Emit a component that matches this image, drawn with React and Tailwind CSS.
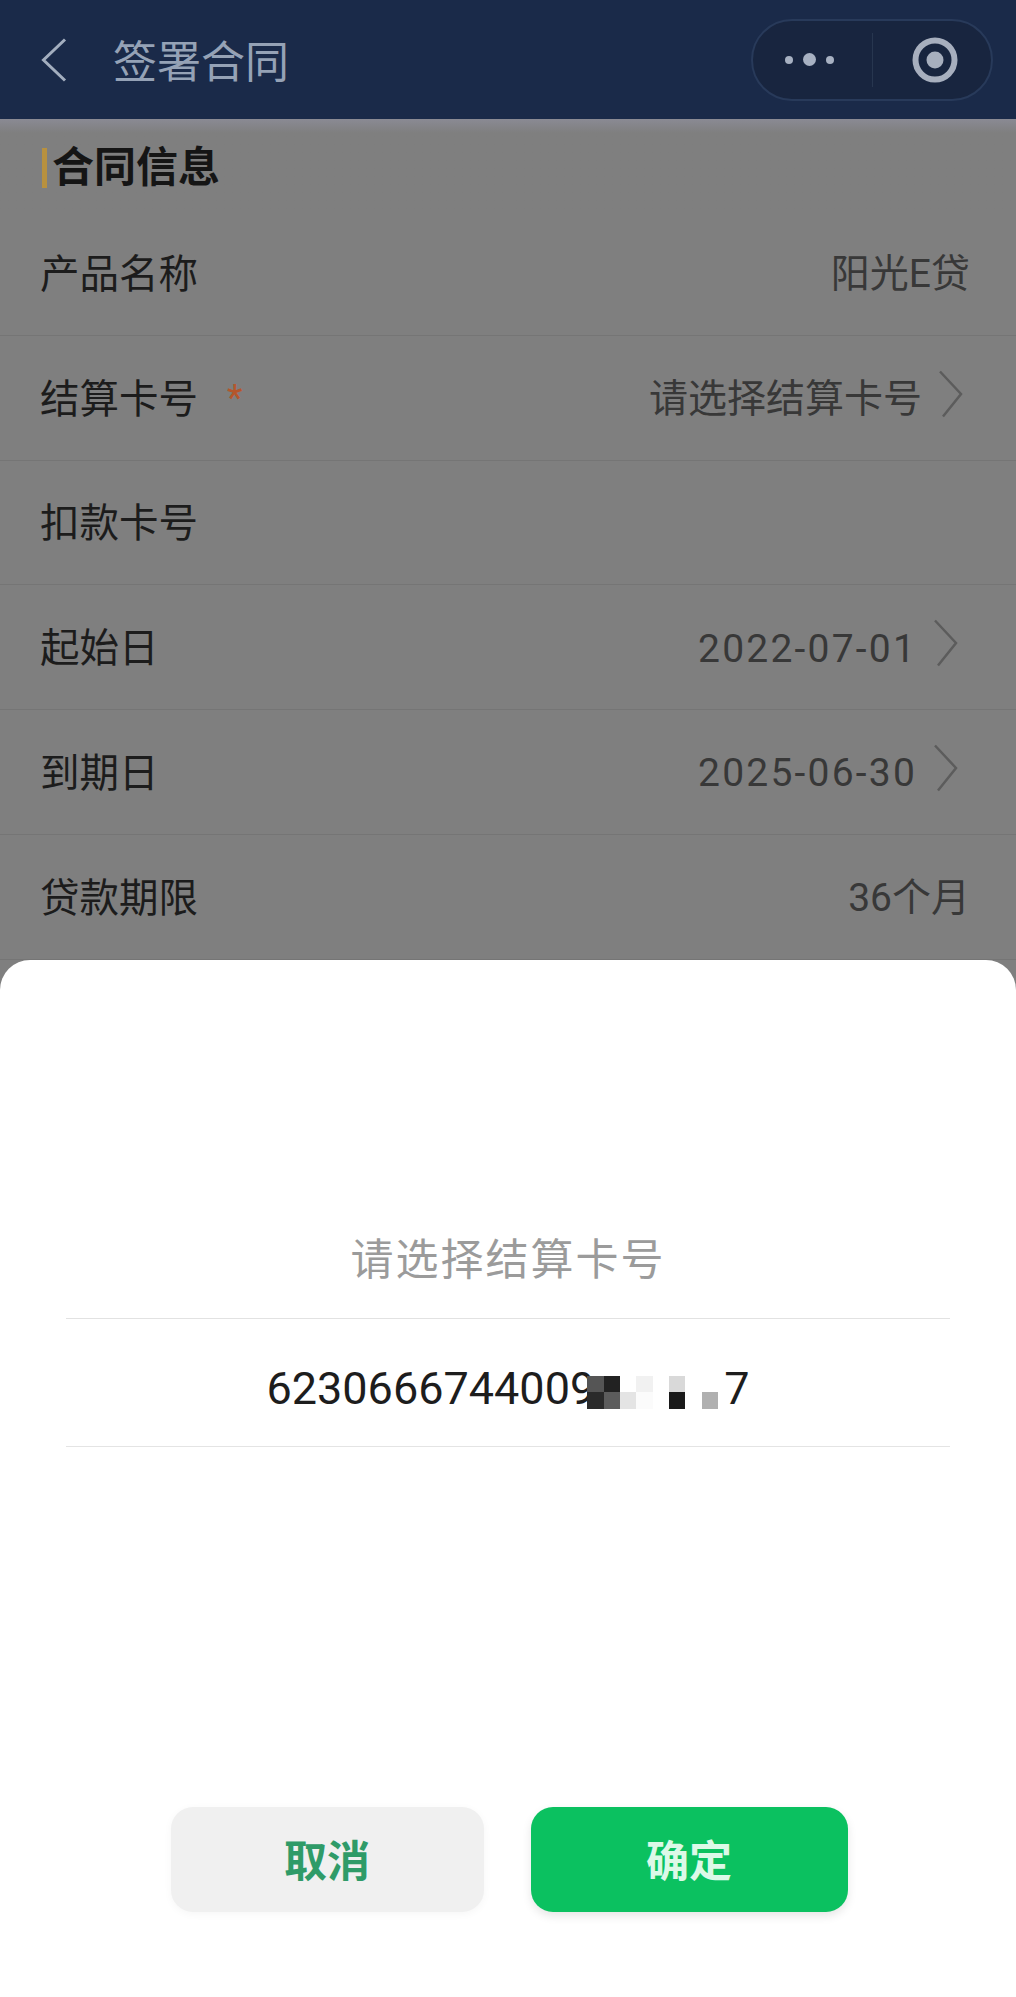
import React from 'react';

const rows = [
  { label: '产品名称', value: '阳光E贷' },
  { label: '结算卡号', value: '请选择结算卡号', required: true, arrow: true, wide: true },
  { label: '扣款卡号' },
  { label: '起始日', value: '2022-07-01', arrow: true, date: true },
  { label: '到期日', value: '2025-06-30', arrow: true, date: true },
  { label: '贷款期限', value: '36个月' },
];

// mosaic over the masked card digits
const mosaic = [
  '#555555', '#222222', '#ffffff', '#f1f1f1', '#ffffff', '#d9d9d9', '#ffffff', '#ffffff',
  '#2a2a2a', '#5c5c5c', '#e4e4e4', '#fbfbfb', '#ffffff', '#1a1a1a', '#ffffff', '#b0b0b0',
];

const Arrow = ({ wide }) => (
  <svg
    width="26"
    height="48"
    viewBox="0 0 26 48"
    fill="none"
    className={wide ? 'ml-[16px] mr-[6px] mb-[8px] shrink-0' : 'ml-[16px] mr-[11px] mb-[8px] shrink-0'}
  >
    <path d="M2 1.5 L23 24 L5 46.5" stroke="#5c5c5c" strokeWidth="2.5" />
  </svg>
);

const Row = ({ label, value, required, arrow, wide, date }) => (
  <div className="h-[124.8px] flex items-center justify-between pl-[40px] pr-[46px] border-b border-[#757575]">
    <div className="flex items-center">
      <span className="pt-[3px] text-[39.5px] text-[#1c1c1c]">{label}</span>
      {required && <span className="ml-[29px] text-[36px] leading-none text-[#b5562b]">*</span>}
    </div>
    <div className="flex items-center">
      {value && (
        <span className={date ? 'pt-[3px] text-[39px] tracking-[2.2px] text-[#383838]' : 'pt-[3px] text-[39px] text-[#383838]'}>
          {value}
        </span>
      )}
      {arrow && <Arrow wide={wide} />}
    </div>
  </div>
);

const App = () => {
  return (
    <div
      className="w-[1016px] h-[1997px] flex flex-col overflow-hidden bg-[#7f7f7f] font-['Roboto','Noto_Sans_CJK_SC',sans-serif]"
    >
      <div className="h-[119px] shrink-0 flex items-center justify-between pl-[41px] pr-[23px] bg-[#1a2a49]">
        <div className="flex items-center">
          <svg width="26" height="44" viewBox="0 0 26 44" fill="none">
            <path d="M24 1.5 L2.5 22 L24 42.5" stroke="#a3aebf" strokeWidth="3" />
          </svg>
          <span className="ml-[46px] pt-[6px] text-[44px] text-[#95a2b6]">签署合同</span>
        </div>
        <div className="w-[242px] h-[82px] flex items-center rounded-full border-2 border-[#283a5a] bg-[#18253f]">
          <div className="w-[120px] h-[54px] flex items-center justify-center gap-[10px] pr-[6px] border-r border-[#27364f]">
            <span className="w-[8px] h-[8px] rounded-full bg-[#a7b1c2]" />
            <span className="w-[13px] h-[13px] rounded-full bg-[#a7b1c2]" />
            <span className="w-[8px] h-[8px] rounded-full bg-[#a7b1c2]" />
          </div>
          <div className="flex-1 flex items-center justify-center pl-[6px]">
            <svg width="46" height="46" viewBox="0 0 46 46" fill="none">
              <circle cx="23" cy="23" r="19.5" stroke="#a7afbe" strokeWidth="6" />
              <circle cx="23" cy="23" r="8.5" fill="#a7afbe" />
            </svg>
          </div>
        </div>
      </div>

      <div className="h-[92px] shrink-0 flex items-center pl-[42px] pt-[5px] bg-gradient-to-b from-[#8a8a94] from-0% to-[#7f7f7f] to-15%">
        <span className="w-[5px] h-[40px] bg-[#b8913f]" />
        <span className="ml-[5px] text-[42px] font-bold text-[#151515]">合同信息</span>
      </div>

      <div className="shrink-0">
        {rows.map((row) => (
          <Row key={row.label} {...row} />
        ))}
      </div>

      <div className="flex-1 flex flex-col rounded-t-[30px] bg-white">
        <div className="mx-[66px] mt-[271px] h-[88px] flex items-start justify-center border-b border-[#e2e2e2]">
          <span className="text-[43px] leading-[58px] tracking-[2px] text-[#9b9b9b]">请选择结算卡号</span>
        </div>
        <div className="mx-[66px] h-[128px] flex items-center justify-center pt-[12px] border-b border-[#e4e4e4] text-[45px] text-[#1d1d1d]">
          <span className="whitespace-nowrap">6230666744009</span>
          <div className="relative w-[131px] -ml-[8px] grid grid-cols-8 mt-[8px]">
            {mosaic.map((color, i) => (
              <span key={i} className="h-[16.5px]" style={{ backgroundColor: color }} />
            ))}
          </div>
          <span className="ml-[6px]">7</span>
        </div>
        <div className="mt-auto mb-[85px] flex justify-center gap-[47px] pl-[2px]">
          <button className="w-[313px] h-[105px] pt-[6px] rounded-[22px] bg-[#f0f0f0] text-[43px] font-bold text-[#2f9b68] shadow-[0_2px_8px_rgba(0,0,0,0.04)]">
            取消
          </button>
          <button className="w-[317px] h-[105px] pt-[6px] rounded-[22px] bg-[#0bc160] text-[43px] font-bold text-[#dcf9e8] shadow-[0_4px_10px_rgba(0,0,0,0.1)]">
            确定
          </button>
        </div>
      </div>
    </div>
  );
};

export default App;
